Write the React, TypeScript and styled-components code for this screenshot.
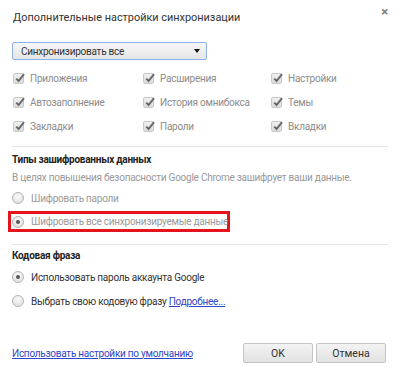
import styled, { createGlobalStyle } from 'styled-components';

const GlobalStyle = createGlobalStyle`
  html, body {
    margin: 0;
    padding: 0;
    background: #ffffff;
  }
  * {
    box-sizing: border-box;
  }
`;

const Dialog = styled.div`
  width: 400px;
  height: 374px;
  background: #ffffff;
  padding: 0 12px;
  font-family: Roboto, 'Liberation Sans', sans-serif;
  font-size: 10px;
  letter-spacing: -0.25px;
  color: #333333;
  overflow: hidden;
  white-space: nowrap;
`;

const Header = styled.div`
  display: flex;
  align-items: center;
  justify-content: space-between;
  height: 26px;
  padding-top: 10px;
`;

const Title = styled.h1`
  margin: 0;
  font-size: 10.9px;
  font-weight: 400;
  letter-spacing: 0;
  line-height: 16px;
  color: #333333;
  padding-left: 1px;
`;

const Close = styled.span`
  align-self: flex-start;
  margin-top: -5px;
  margin-right: 0;
  font-size: 13px;
  font-weight: 700;
  color: #7a7a7a;
  line-height: 14px;
`;

const Select = styled.div`
  margin-top: 16px;
  width: 195px;
  height: 18px;
  display: flex;
  align-items: center;
  justify-content: space-between;
  padding: 0 6px 0 8px;
  border: 1px solid #8fb1e6;
  border-radius: 2px;
  background: linear-gradient(180deg, #f6f6f6 0%, #e6e6e6 100%);
  color: #333333;
`;

const Arrow = styled.span`
  width: 0;
  height: 0;
  border-left: 3.5px solid transparent;
  border-right: 3.5px solid transparent;
  border-top: 4px solid #111111;
`;

const CheckGrid = styled.div`
  margin-top: 6px;
  display: grid;
  grid-template-columns: 130px 128px 1fr;
  grid-auto-rows: 24px;
`;

const CheckItem = styled.label`
  display: flex;
  align-items: center;
  gap: 6px;
  color: #8c8c8c;
`;

const CheckBox = styled.span`
  position: relative;
  width: 11px;
  height: 11px;
  border: 1px solid #c8c8c8;
  border-radius: 2px;
  background: linear-gradient(180deg, #f0f0f0 0%, #dcdcdc 100%);
  flex-shrink: 0;
  margin-left: 1px;

  svg {
    position: absolute;
    left: 0px;
    top: -2px;
  }
`;

const Divider = styled.hr<{ $top: number }>`
  margin: ${(p) => p.$top}px 0 0;
  border: none;
  border-top: 1px solid #e4e4e4;
  height: 0;
`;

const Heading = styled.h2<{ $top: number }>`
  margin: ${(p) => p.$top}px 0 0;
  font-size: 10px;
  font-weight: 700;
  line-height: 16px;
  color: #222222;
`;

const Note = styled.p`
  margin: 2px 0 0;
  line-height: 16px;
  color: #999999;
`;

const RadioRow = styled.div<{ $top: number; $muted?: boolean }>`
  margin-top: ${(p) => p.$top}px;
  height: 20px;
  display: flex;
  align-items: center;
  gap: 7px;
  color: ${(p) => (p.$muted ? '#9a9a9a' : '#333333')};
`;

const Highlight = styled.div`
  margin: 3px 0 0 -4px;
  width: 222px;
  height: 21px;
  border: 3px solid #e3141c;
  padding-left: 1px;
  display: flex;
  align-items: center;
  gap: 7px;
  color: #9a9a9a;
`;

const Radio = styled.span<{ $on?: boolean }>`
  width: 12px;
  height: 12px;
  border-radius: 50%;
  border: 1px solid #b4b4b4;
  background: radial-gradient(circle at 50% 35%, #fbfbfb 0%, #e4e4e4 70%, #d6d6d6 100%);
  display: flex;
  align-items: center;
  justify-content: center;
  flex-shrink: 0;

  &::after {
    content: '';
    display: ${(p) => (p.$on ? 'block' : 'none')};
    width: 4px;
    height: 4px;
    border-radius: 50%;
    background: #555555;
  }
`;

const Link = styled.a`
  color: #2f45c9;
  text-decoration: underline;
  cursor: pointer;
`;

const Footer = styled.div`
  margin-top: 32px;
  height: 20px;
  display: flex;
  align-items: center;
  justify-content: space-between;
  padding-right: 2px;
`;

const Buttons = styled.div`
  display: flex;
  gap: 3px;
`;

const Button = styled.button`
  width: 70px;
  height: 20px;
  padding: 0;
  border: 1px solid #c4c4c4;
  border-radius: 2px;
  background: linear-gradient(180deg, #f3f3f3 0%, #e2e2e2 100%);
  font-family: inherit;
  font-size: 10.5px;
  color: #333333;
`;

const Check = () => (
  <svg width="12" height="12" viewBox="0 0 12 12">
    <path d="M2.2 6.6 L4.6 9 L10 2.2" fill="none" stroke="#6a6a6a" strokeWidth="2" />
  </svg>
);

const items = [
  'Приложения',
  'Расширения',
  'Настройки',
  'Автозаполнение',
  'История омнибокса',
  'Темы',
  'Закладки',
  'Пароли',
  'Вкладки',
];

export default function App() {
  return (
    <Dialog>
      <GlobalStyle />
      <Header>
        <Title>Дополнительные настройки синхронизации</Title>
        <Close>×</Close>
      </Header>

      <Select>
        <span>Синхронизировать все</span>
        <Arrow />
      </Select>

      <CheckGrid>
        {items.map((label) => (
          <CheckItem key={label}>
            <CheckBox>
              <Check />
            </CheckBox>
            {label}
          </CheckItem>
        ))}
      </CheckGrid>

      <Divider $top={8} />
      <Heading $top={5}>Типы зашифрованных данных</Heading>
      <Note>В целях повышения безопасности Google Chrome зашифрует ваши данные.</Note>
      <RadioRow $top={2} $muted>
        <Radio />
        Шифровать пароли
      </RadioRow>
      <Highlight>
        <Radio $on />
        Шифровать все синхронизируемые данные
      </Highlight>

      <Divider $top={12} />
      <Heading $top={3}>Кодовая фраза</Heading>
      <RadioRow $top={3}>
        <Radio $on />
        Использовать пароль аккаунта Google
      </RadioRow>
      <RadioRow $top={4}>
        <Radio />
        <span>
          Выбрать свою кодовую фразу <Link>Подробнее...</Link>
        </span>
      </RadioRow>

      <Footer>
        <Link>Использовать настройки по умолчанию</Link>
        <Buttons>
          <Button>OK</Button>
          <Button>Отмена</Button>
        </Buttons>
      </Footer>
    </Dialog>
  );
}
